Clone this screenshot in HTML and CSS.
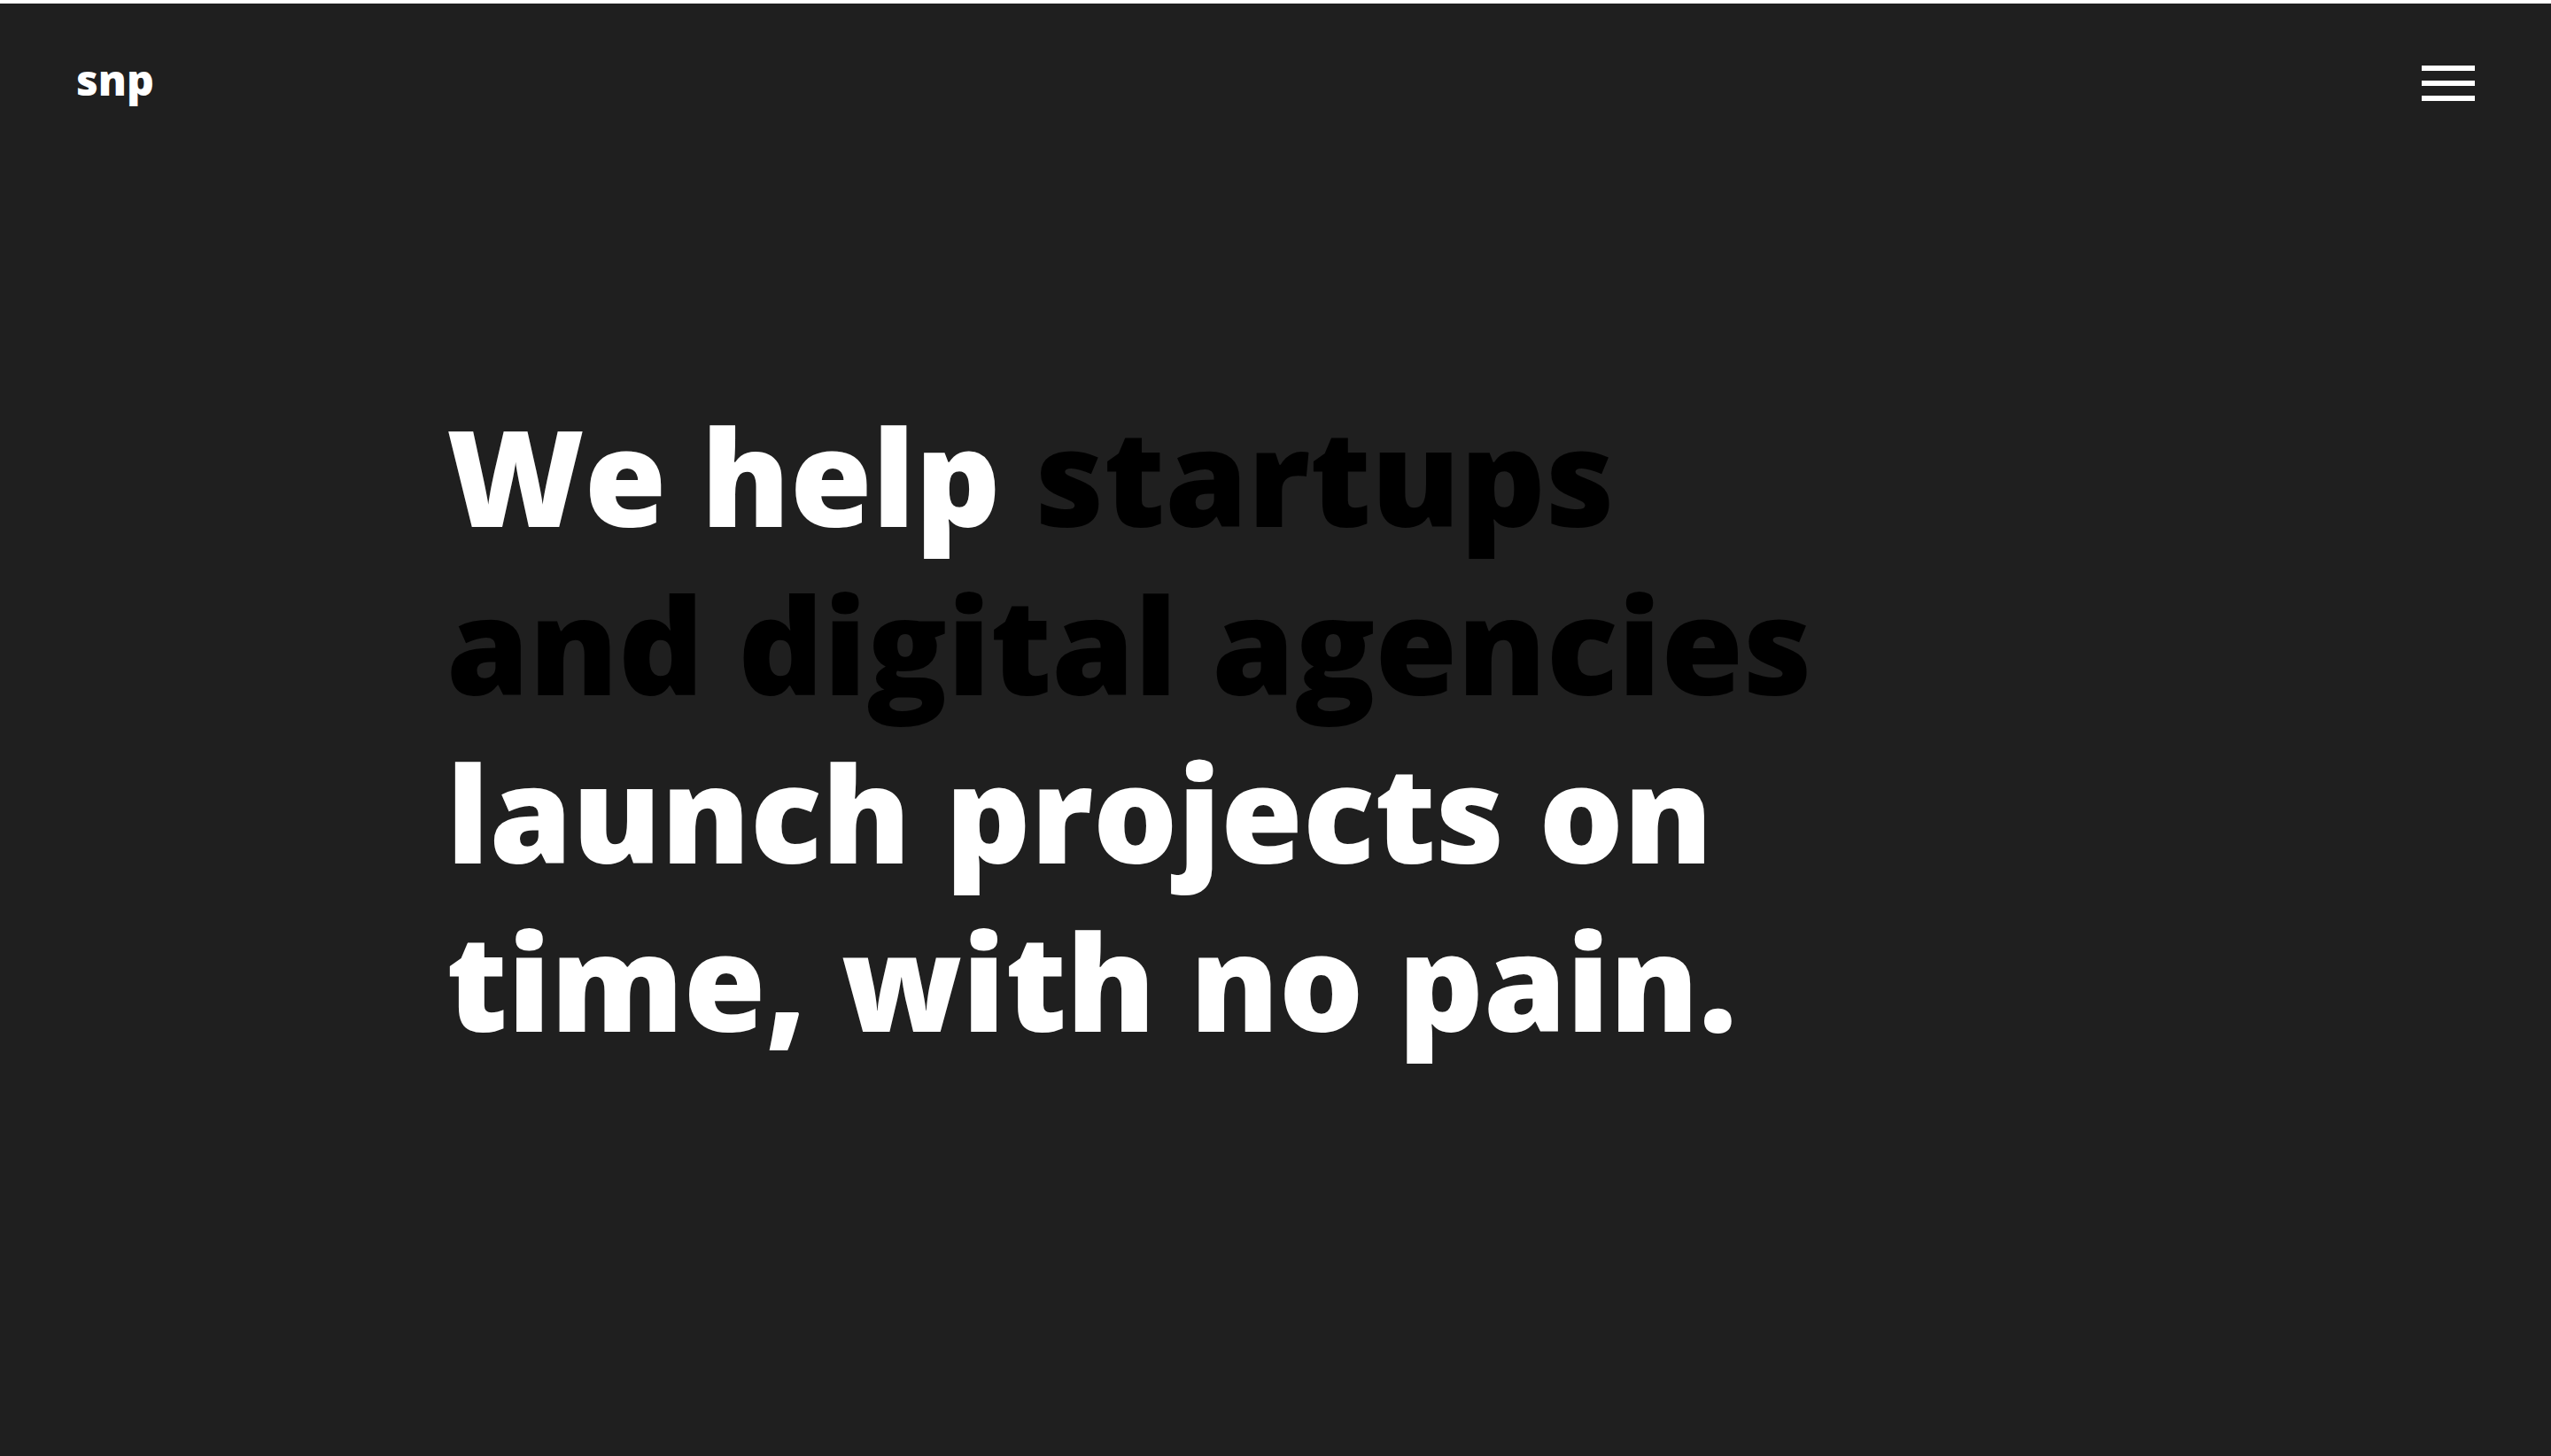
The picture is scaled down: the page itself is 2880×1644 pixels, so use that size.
FILE: index.html
```html
<!DOCTYPE html>
<html lang="en">
<head>
<meta charset="utf-8">
<meta name="viewport" content="width=device-width, initial-scale=1">
<title>snp</title>
<link rel="stylesheet" href="styles.css">
</head>
<body>
<header class="header">
  <a class="logo" href="#">snp</a>
  <button class="menu" type="button" aria-label="Open menu">
    <span class="menu-bar"></span>
    <span class="menu-bar"></span>
    <span class="menu-bar"></span>
  </button>
</header>
<main class="hero">
  <h1 class="headline">We help <span class="accent">startups<br>and digital agencies</span><br>launch projects on<br>time, with no pain.</h1>
</main>
</body>
</html>
```

FILE: styles.css
```css
* {
  box-sizing: border-box;
}

body {
  margin: 0;
  min-height: 100vh;
  border-top: 4px solid #fff;
  background: #1f1f1f;
  color: #fff;
  font-family: "Open Sans", sans-serif;
  font-weight: 800;
}

.header {
  display: flex;
  align-items: center;
  justify-content: space-between;
  padding: 54px 86px;
}

.logo {
  color: inherit;
  font-size: 48px;
  line-height: 64px;
  text-decoration: none;
}

.menu {
  display: flex;
  flex-direction: column;
  gap: 11px;
  width: 60px;
  padding: 8px 0 0;
  border: 0;
  background: none;
  cursor: pointer;
}

.menu-bar {
  height: 6px;
  background: #fff;
}

.hero {
  padding: 266px 504px;
}

.headline {
  margin: 0;
  font-size: 150px;
  font-weight: 800;
  line-height: 190px;
  white-space: nowrap;
  font-variant-ligatures: none;
}

.accent {
  color: #000;
}
```
